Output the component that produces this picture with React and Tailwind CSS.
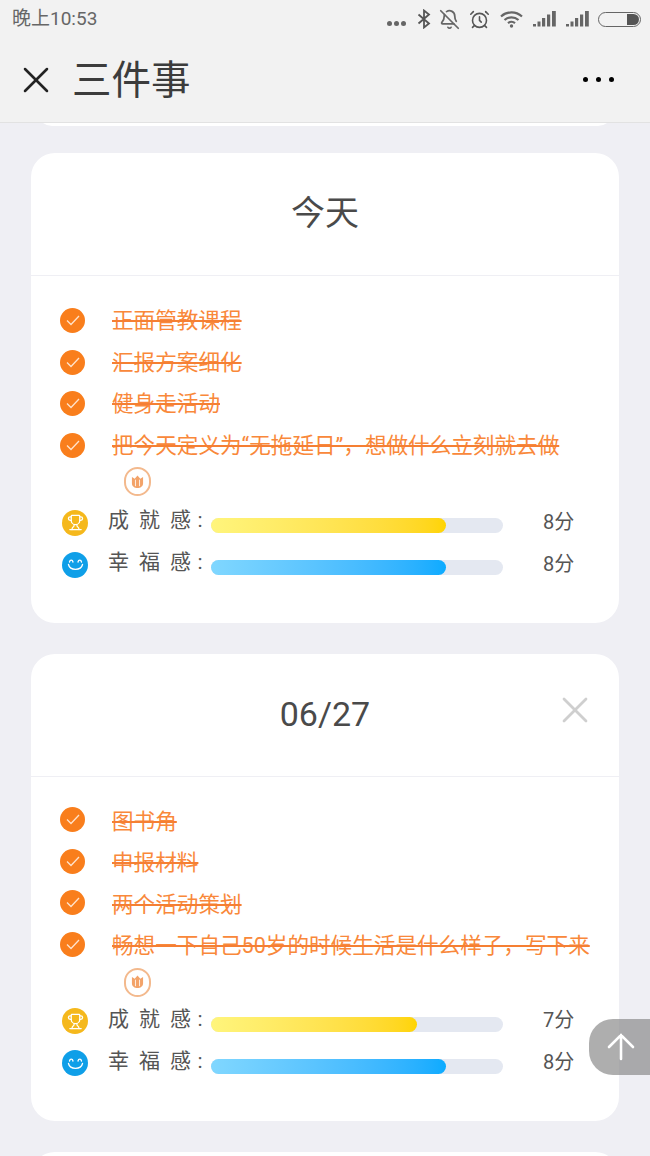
import { AlarmClock, BellOff, Trophy, X } from "lucide-react";

const days = [
  {
    title: "今天",
    closable: false,
    circleShift: "pb-[1px]",
    scoresTop: "mt-[10px]",
    tasks: [
      "正面管教课程",
      "汇报方案细化",
      "健身走活动",
      "把今天定义为“无拖延日”，想做什么立刻就去做",
    ],
    achievement: 8,
    happiness: 8,
  },
  {
    title: "06/27",
    closable: true,
    circleShift: "pb-[4px]",
    scoresTop: "mt-[8px]",
    tasks: [
      "图书角",
      "申报材料",
      "两个活动策划",
      "畅想一下自己50岁的时候生活是什么样子，写下来",
    ],
    achievement: 7,
    happiness: 8,
  },
];

const Signal = () => (
  <svg width="24" height="18" viewBox="0 0 24 18" fill="#666">
    <rect x="0" y="14" width="3" height="2.500" />
    <rect x="4.500" y="11.500" width="3" height="5" />
    <rect x="9" y="8" width="3.200" height="8.500" />
    <rect x="14" y="4.500" width="3.200" height="12" />
    <rect x="19" y="1" width="3.800" height="15.500" />
  </svg>
);

const StatusBar = () => (
  <div className="flex h-[38px] items-center justify-between pl-[12px] pr-[9px] text-[19px] text-[#666]">
    <span>晚上10:53</span>
    <div className="flex items-center">
      <div className="mt-[9px] flex gap-[2px]">
        <span className="h-[5px] w-[5px] rounded-full bg-[#666]" />
        <span className="h-[5px] w-[5px] rounded-full bg-[#666]" />
        <span className="h-[5px] w-[5px] rounded-full bg-[#666]" />
      </div>
      <svg className="ml-[11px]" width="14" height="20" viewBox="0 0 14 20" fill="none" stroke="#555" strokeWidth="1.800">
        <path d="M1.500 5.500 12 14.500 7 18.500V1.500L12 5.500 1.500 14.500" />
      </svg>
      <BellOff className="ml-[8px]" size={21} color="#666" strokeWidth={2} />
      <AlarmClock className="ml-[9px]" size={21} color="#555" strokeWidth={1.800} />
      <svg className="ml-[10px]" width="24" height="18" viewBox="0 0 24 18" fill="none" stroke="#666" strokeWidth="2.200">
        <path d="M1 6.500C7 1 16 1 22 6.500" />
        <path d="M4.500 10C8.500 6.500 14.500 6.500 18.500 10" />
        <path d="M8 13.200C10 11.500 13 11.500 15 13.200" />
        <circle cx="11.500" cy="16" r="1.700" fill="#666" stroke="none" />
      </svg>
      <div className="ml-[9px]">
        <Signal />
      </div>
      <div className="ml-[9px]">
        <Signal />
      </div>
      <div className="ml-[8px] flex h-[15px] w-[43px] items-center justify-end rounded-full border border-[#666] pr-[1px]">
        <span className="h-[11px] w-[12px] rounded-r-full bg-[#555]" />
      </div>
    </div>
  </div>
);

const NavBar = () => (
  <div className="flex h-[85px] items-center border-b border-[#e2e2e2] pb-[1px] pl-[22px] pr-[36px]">
    <X size={44} color="#222" strokeWidth={1.400} className="-ml-[8px]" />
    <h1 className="ml-[14px] mt-[3px] flex-1 text-[39.500px] leading-none text-[#3c3c3c]">三件事</h1>
    <div className="flex gap-[8px]">
      <span className="h-[5px] w-[5px] rounded-full bg-black" />
      <span className="h-[5px] w-[5px] rounded-full bg-black" />
      <span className="h-[5px] w-[5px] rounded-full bg-black" />
    </div>
  </div>
);

const Flower = () => (
  <span className="ml-[12px] inline-flex h-[29px] w-[27px] -translate-y-px items-center justify-center rounded-full border-2 border-[#f3b98d] align-middle">
    <svg width="13" height="14" viewBox="0 0 14 15" fill="#f3a369">
      <path d="M1 2 4 4 7 0.500 10 4 13 2V9C13 12 10 14 7 14 4 14 1 12 1 9Z" />
      <path d="M4.800 5V12M9.200 5V12" stroke="#fff" strokeWidth="0.900" />
    </svg>
  </span>
);

const TaskRow = ({ text, reward, circleShift }) => (
  <div className="flex">
    <div className={`flex h-[36px] w-[52px] shrink-0 items-center ${circleShift}`}>
      <span className="flex h-[25px] w-[25px] items-center justify-center rounded-full bg-[#f97e1c]">
        <svg width="14" height="11" viewBox="0 0 14 11" fill="none" stroke="#ffe3cc" strokeWidth="1.300">
          <path d="M1 5.500 5 9.500 13 1" />
        </svg>
      </span>
    </div>
    <p className="w-[478px] text-[21.6px] leading-[36px] text-[#f9883a]">
      <span className="line-through decoration-[#f57f33]">{text}</span>
      {reward && <Flower />}
    </p>
  </div>
);

const ScoreRow = ({ label, score, icon, barClass }) => (
  <div className="flex h-[26px] items-center">
    <div className="ml-[2px] w-[46px] shrink-0">{icon}</div>
    <span className="-mt-[3px] w-[103px] shrink-0 whitespace-nowrap text-[21px] tracking-[2.400px] text-[#555]">
      {label}
      <span className="ml-[4px]">:</span>
    </span>
    <div className="mt-[6px] h-[15px] w-[292px] shrink-0 rounded-full bg-[#e4e8f1]">
      <div className={`h-full rounded-full ${barClass}`} style={{ width: `${score * 10 + 0.5}%` }} />
    </div>
    <span className="-mt-[2px] ml-[40px] whitespace-nowrap text-[20px] text-[#555]">{score}分</span>
  </div>
);

const TrophyIcon = () => (
  <span className="flex h-[26px] w-[26px] items-center justify-center rounded-full bg-[#f5b81c]">
    <Trophy size={17} color="#fff" strokeWidth={1.800} />
  </span>
);

const SmileIcon = () => (
  <span className="flex h-[26px] w-[26px] items-center justify-center rounded-full bg-[#0f9fe8]">
    <svg width="17" height="15" viewBox="0 0 17 15" fill="none" stroke="#fff" strokeWidth="1.300" strokeLinecap="round">
      <path d="M2.500 5C3 2.500 5.500 2.500 6 5" />
      <path d="M11 5C11.500 2.500 14 2.500 14.500 5" />
      <path d="M1.500 7.500C3 14 14 14 15.500 7.500" />
    </svg>
  </span>
);

const DayCard = ({ day }) => (
  <section className="rounded-[24px] bg-white pb-[45px]">
    <header className="relative flex h-[123px] items-center justify-center border-b border-[#efeff4] pb-[1px]">
      <h2 className="text-[34px] text-[#4a4a4a]">{day.title}</h2>
      {day.closable && (
        <X size={44} color="#cfcfcf" strokeWidth={1.500} className="absolute right-[22px] top-[34px]" />
      )}
    </header>
    <div className="pl-[29px] pt-[27px]">
      <div className="flex flex-col gap-[5.500px]">
        {day.tasks.map((task, i) => (
          <TaskRow
            key={task}
            text={task}
            reward={i === day.tasks.length - 1}
            circleShift={day.circleShift}
          />
        ))}
      </div>
      <div className={`flex flex-col gap-[16px] ${day.scoresTop}`}>
        <ScoreRow
          label="成 就 感"
          score={day.achievement}
          icon={<TrophyIcon />}
          barClass="bg-gradient-to-r from-[#fff57c] to-[#ffd400]"
        />
        <ScoreRow
          label="幸 福 感"
          score={day.happiness}
          icon={<SmileIcon />}
          barClass="bg-gradient-to-r from-[#80d7ff] to-[#0aabff]"
        />
      </div>
    </div>
  </section>
);

const App = () => {
  return (
    <div className="relative h-[1156px] w-[650px] overflow-hidden bg-[#efeff4] font-['Roboto','Noto_Sans_CJK_SC',sans-serif]">
      <div className="bg-[#f2f2f2]">
        <StatusBar />
        <NavBar />
      </div>

      <div className="flex flex-col gap-[31px] px-[31px]">
        {/* bottom edge of the card scrolled away under the nav bar */}
        <div className="-mb-[4px] mx-[6px] h-[3px] overflow-hidden">
          <div className="-mt-[27px] h-[30px] rounded-[24px] bg-white" />
        </div>
        {days.map((day) => (
          <DayCard key={day.title} day={day} />
        ))}
        <div className="h-[60px] rounded-[24px] bg-white" />
      </div>

      <button className="absolute left-[589px] top-[1019px] flex h-[56px] w-[61px] items-center rounded-l-[24px] bg-[#8c8c8c]/70 pl-[18px]">
        <svg width="28" height="28" viewBox="0 0 28 28" fill="none" stroke="#fff" strokeWidth="2.600" strokeLinecap="round">
          <path d="M14 26V2M2 14 14 2 26 14" />
        </svg>
      </button>
    </div>
  );
};

export default App;
